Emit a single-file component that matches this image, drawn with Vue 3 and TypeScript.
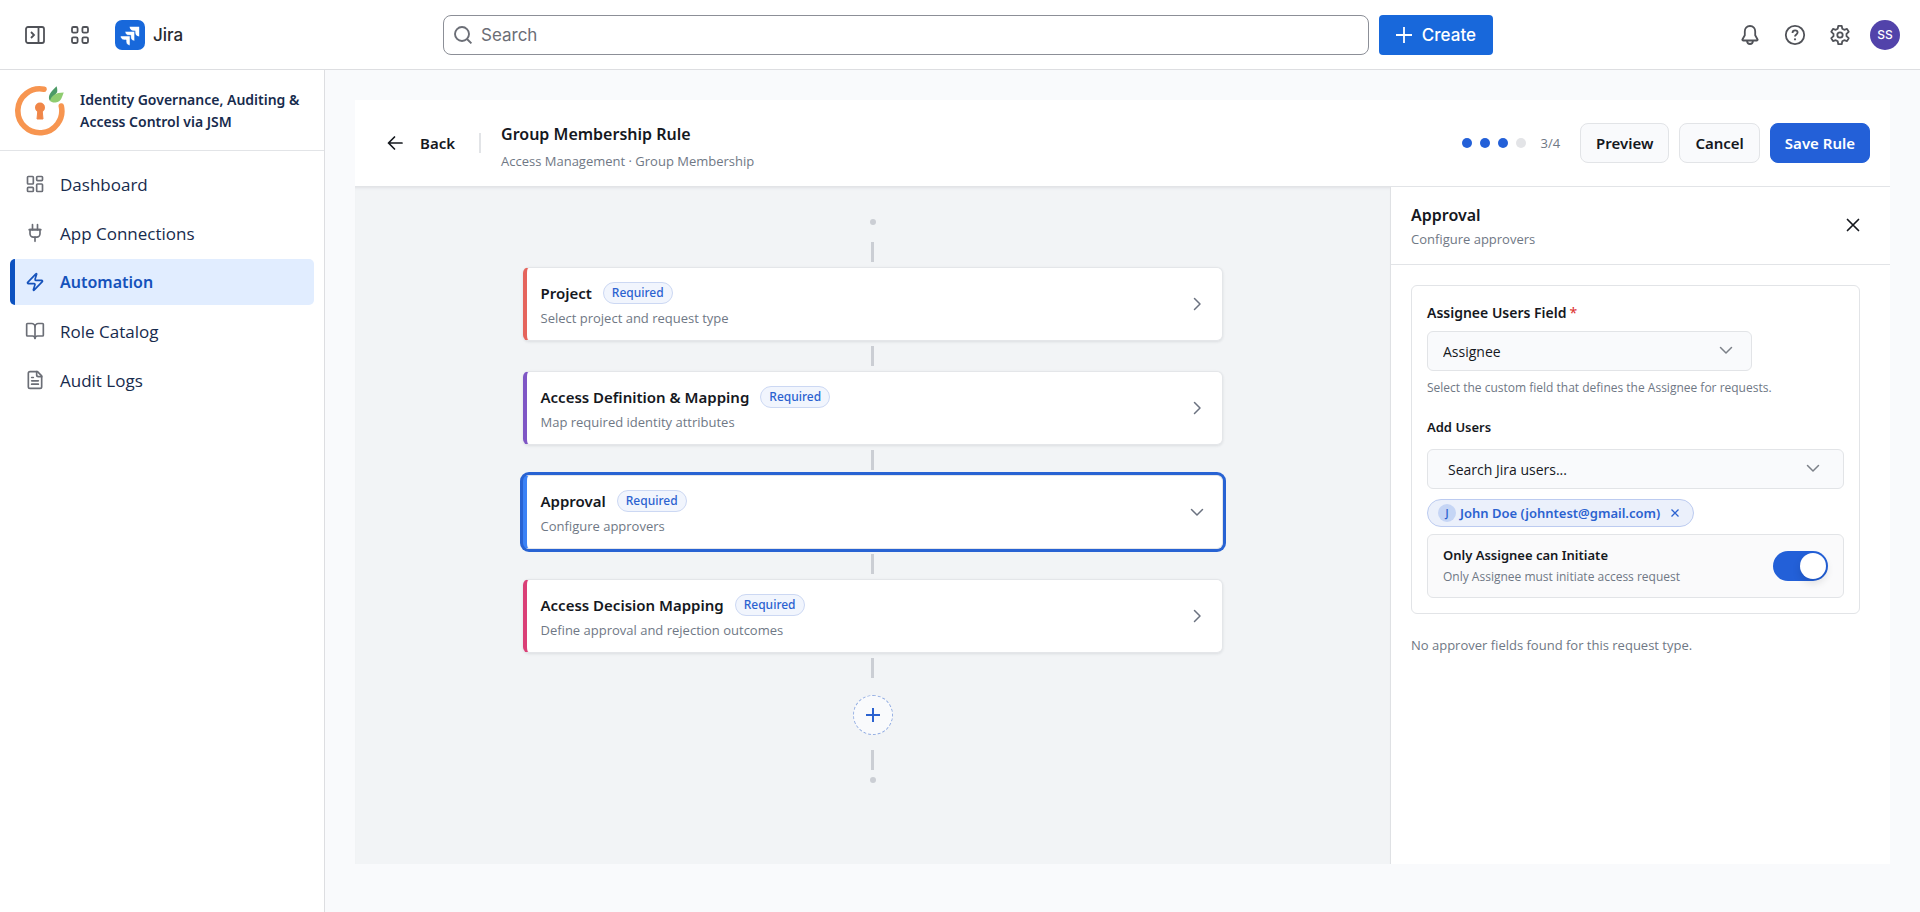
<script setup lang="ts">
import { ref } from 'vue'

interface NavItem { label: string; paths: string[] }
interface Step { title: string; text: string; color: string }

const nav: NavItem[] = [
  { label: 'Dashboard', paths: ['M4 3h5a1 1 0 0 1 1 1v7a1 1 0 0 1-1 1H4a1 1 0 0 1-1-1V4a1 1 0 0 1 1-1z', 'M15 3h5a1 1 0 0 1 1 1v3a1 1 0 0 1-1 1h-5a1 1 0 0 1-1-1V4a1 1 0 0 1 1-1z', 'M15 12h5a1 1 0 0 1 1 1v7a1 1 0 0 1-1 1h-5a1 1 0 0 1-1-1v-7a1 1 0 0 1 1-1z', 'M4 16h5a1 1 0 0 1 1 1v3a1 1 0 0 1-1 1H4a1 1 0 0 1-1-1v-3a1 1 0 0 1 1-1z'] },
  { label: 'App Connections', paths: ['M12 22v-5', 'M9 8V2', 'M15 8V2', 'M18 8v5a4 4 0 0 1-4 4h-4a4 4 0 0 1-4-4V8z', 'M5 8h14'] },
  { label: 'Automation', paths: ['M4 14a1 1 0 0 1-.78-1.63l9.9-10.2a.5.5 0 0 1 .86.46l-1.92 6.02A1 1 0 0 0 13 10h7a1 1 0 0 1 .78 1.63l-9.9 10.2a.5.5 0 0 1-.86-.46l1.92-6.02A1 1 0 0 0 11 14z'] },
  { label: 'Role Catalog', paths: ['M12 7v14', 'M3 18a1 1 0 0 1-1-1V4a1 1 0 0 1 1-1h5a4 4 0 0 1 4 4 4 4 0 0 1 4-4h5a1 1 0 0 1 1 1v13a1 1 0 0 1-1 1h-6a3 3 0 0 0-3 3 3 3 0 0 0-3-3z'] },
  { label: 'Audit Logs', paths: ['M15 2H6a2 2 0 0 0-2 2v16a2 2 0 0 0 2 2h12a2 2 0 0 0 2-2V7z', 'M14 2v4a2 2 0 0 0 2 2h4', 'M10 9H8', 'M16 13H8', 'M16 17H8'] },
]
const activeNav = ref('Automation')

const steps: Step[] = [
  { title: 'Project', text: 'Select project and request type', color: '#e5645c' },
  { title: 'Access Definition & Mapping', text: 'Map required identity attributes', color: '#7f56c5' },
  { title: 'Approval', text: 'Configure approvers', color: '#3b82f6' },
  { title: 'Access Decision Mapping', text: 'Define approval and rejection outcomes', color: '#da3f76' },
]
const activeStep = ref('Approval')
const field = ref('Assignee')
const users = ref(['John Doe (johntest@gmail.com)'])
const onlyAssignee = ref(true)
</script>

<template>
  <div class="shell">
    <header class="topbar">
      <div class="top-left">
        <button class="icon-btn" aria-label="Expand sidebar">
          <svg width="20" height="18" viewBox="0 0 20 18" fill="none" stroke="currentColor" stroke-width="1.8"><rect x="1" y="1" width="18" height="16" rx="2" /><path d="M13.5 1v16M6 6l3 3-3 3" /></svg>
        </button>
        <button class="icon-btn" aria-label="App switcher">
          <svg width="18" height="18" viewBox="0 0 18 18" fill="none" stroke="currentColor" stroke-width="1.8"><rect x="1" y="1" width="5.6" height="5.6" rx="1.4" /><rect x="11.4" y="1" width="5.6" height="5.6" rx="1.4" /><rect x="1" y="11.4" width="5.6" height="5.6" rx="1.4" /><rect x="11.4" y="11.4" width="5.6" height="5.6" rx="1.4" /></svg>
        </button>
        <a class="brand" href="#">
          <svg width="30" height="30" viewBox="0 0 30 30"><rect width="30" height="30" rx="7" fill="#1868db" /><g fill="#fff"><path d="M14.6 6.8h9.6v9.6c-2.4 0-3.9-1.8-3.9-3.9v-1.8h-1.8c-2.1 0-3.9-1.5-3.9-3.9z" /><path d="M10 11.4h9.6V21c-2.4 0-3.9-1.8-3.9-3.9v-1.8h-1.8c-2.1 0-3.9-1.5-3.9-3.9z" stroke="#1868db" stroke-width=".5" /><path d="M5.4 16H15v9.4c-2.4 0-3.9-1.8-3.9-3.9v-1.6H9.3C7.2 19.9 5.4 18.4 5.4 16z" stroke="#1868db" stroke-width=".5" /></g></svg>
          <span>Jira</span>
        </a>
      </div>
      <div class="top-center">
        <label class="search">
          <svg width="20" height="20" viewBox="0 0 20 20" fill="none" stroke="currentColor" stroke-width="1.9"><circle cx="9" cy="9" r="7" /><path d="M14 14l4.4 4.4" /></svg>
          <input type="search" placeholder="Search" aria-label="Search" />
        </label>
        <button class="create">
          <svg width="16" height="16" viewBox="0 0 16 16" fill="none" stroke="currentColor" stroke-width="1.8"><path d="M8 0v16M0 8h16" /></svg>
          Create
        </button>
      </div>
      <div class="top-right">
        <button class="icon-btn" aria-label="Notifications">
          <svg width="22" height="22" viewBox="0 0 22 22" fill="none" stroke="currentColor" stroke-width="1.8" stroke-linejoin="round"><path d="M11 2c-3.3 0-5.2 2.5-5.2 5.4v3.8L3.4 15.5a.7.7 0 0 0 .6 1h14a.7.7 0 0 0 .6-1l-2.4-4.3V7.4C16.2 4.5 14.3 2 11 2zM8 16.8c.2 2.2 1.4 3.2 3 3.2s2.8-1 3-3.2" /></svg>
        </button>
        <button class="icon-btn" aria-label="Help">
          <svg width="22" height="22" viewBox="0 0 22 22" fill="none" stroke="currentColor" stroke-width="1.8"><circle cx="11" cy="11" r="9.2" /><path d="M8.5 8.9c0-1.5 1.1-2.5 2.6-2.5s2.5.9 2.5 2.2c0 1.9-2.6 1.9-2.6 4" /><circle cx="11" cy="15.3" r="1.1" fill="currentColor" stroke="none" /></svg>
        </button>
        <button class="icon-btn" aria-label="Settings">
          <svg width="22" height="22" viewBox="0 0 22 22" fill="none" stroke="currentColor" stroke-width="1.8" stroke-linejoin="round"><circle cx="11" cy="11" r="2.7" /><path d="M9.3 1.8h3.4l.6 2.9 1.9 1.1 2.8-.9 1.7 2.9-2.2 2v2.4l2.2 2-1.7 2.9-2.8-.9-1.9 1.1-.6 2.9H9.3l-.6-2.9-1.9-1.1-2.8.9-1.7-2.9 2.2-2V9.8l-2.2-2L4 4.9l2.8.9 1.9-1.1z" /></svg>
        </button>
        <button class="avatar" aria-label="Account">SS</button>
      </div>
    </header>

    <div class="body">
      <aside class="sidebar">
        <div class="app-head">
          <svg width="52" height="52" viewBox="0 0 52 52"><path d="M30 4.2A22 22 0 1 0 47.3 21" fill="none" stroke="#f79550" stroke-width="5.6" stroke-linecap="round" /><circle cx="26" cy="22.5" r="5" fill="#f08648" /><path d="M24 24h4l1 10h-6z" fill="#f08648" stroke="#f08648" stroke-linejoin="round" /><path d="M35 14c-.6-5 3-8 7.5-12.8 1 2.6.9 4.5.6 6L36 16z" fill="#4c9a66" /><path d="M36 16c1.5-5.500 5.500-8.500 13.800-8.500-1.600 3-2 9.500-8.300 10-2.500.2-4.500-.5-5.500-1.500z" fill="#8fcc70" /></svg>
          <div class="app-name">Identity Governance, Auditing &amp; Access Control via JSM</div>
        </div>
        <nav class="nav">
          <a v-for="item in nav" :key="item.label" href="#" :class="{ active: item.label === activeNav }" @click.prevent="activeNav = item.label">
            <svg width="20" height="20" viewBox="0 0 24 24" fill="none" stroke="currentColor" stroke-width="2" stroke-linecap="round" stroke-linejoin="round"><path v-for="p in item.paths" :key="p" :d="p" /></svg>
            {{ item.label }}
          </a>
        </nav>
      </aside>

      <main class="main">
        <section class="rule">
          <header class="rule-head">
            <button class="back">
              <svg width="16" height="16" viewBox="0 0 16 16" fill="none" stroke="currentColor" stroke-width="1.7" stroke-linecap="round" stroke-linejoin="round"><path d="M15 8H1.5M7.5 2l-6 6 6 6" /></svg>
              Back
            </button>
            <span class="divider"></span>
            <div class="rule-title">
              <h1>Group Membership Rule</h1>
              <p>Access Management · Group Membership</p>
            </div>
            <div class="progress">
              <i v-for="n in 4" :key="n" :class="{ done: n < 4 }"></i>
              <span>3/4</span>
            </div>
            <div class="actions">
              <button>Preview</button>
              <button>Cancel</button>
              <button class="primary">Save Rule</button>
            </div>
          </header>

          <div class="rule-body">
            <div class="canvas">
              <span class="dot"></span>
              <span class="line first"></span>
              <template v-for="step in steps" :key="step.title">
                <button class="step" :class="{ open: step.title === activeStep }" :style="{ borderLeftColor: step.color }" @click="activeStep = step.title">
                  <span class="step-text">
                    <span class="step-title">{{ step.title }}<span class="badge">Required</span></span>
                    <span class="step-sub">{{ step.text }}</span>
                  </span>
                  <svg class="chev" width="16" height="16" viewBox="0 0 16 16" fill="none" stroke="currentColor" stroke-width="1.5" stroke-linecap="round" stroke-linejoin="round"><path :d="step.title === activeStep ? 'M2.5 5.5L8 11l5.5-5.5' : 'M5.5 2.5L11 8l-5.5 5.5'" /></svg>
                </button>
                <span class="line"></span>
              </template>
              <button class="add" aria-label="Add step">
                <svg width="14" height="14" viewBox="0 0 14 14" stroke="currentColor" stroke-width="2"><path d="M7 0v14M0 7h14" /></svg>
              </button>
              <span class="line last"></span>
              <span class="dot"></span>
            </div>

            <aside class="panel">
              <header class="panel-head">
                <div>
                  <h2>Approval</h2>
                  <p>Configure approvers</p>
                </div>
                <button class="close" aria-label="Close">
                  <svg width="14" height="14" viewBox="0 0 14 14" stroke="currentColor" stroke-width="1.7" stroke-linecap="round"><path d="M1.5 1.5l11 11M12.5 1.5l-11 11" /></svg>
                </button>
              </header>
              <div class="panel-body">
                <div class="box">
                  <label class="lbl" for="field">Assignee Users Field<em>*</em></label>
                  <div class="control short">
                    <select id="field" v-model="field"><option>Assignee</option><option>Reporter</option></select>
                    <svg width="14" height="14" viewBox="0 0 14 14" fill="none" stroke="currentColor" stroke-width="1.5" stroke-linecap="round" stroke-linejoin="round"><path d="M1.5 4.5L7 10l5.5-5.5" /></svg>
                  </div>
                  <p class="help">Select the custom field that defines the Assignee for requests.</p>
                  <label class="lbl small" for="users">Add Users</label>
                  <div class="control users">
                    <input id="users" type="text" placeholder="Search Jira users..." />
                    <svg width="14" height="14" viewBox="0 0 14 14" fill="none" stroke="currentColor" stroke-width="1.5" stroke-linecap="round" stroke-linejoin="round"><path d="M1.5 4.5L7 10l5.5-5.5" /></svg>
                  </div>
                  <div v-for="u in users" :key="u" class="chip">
                    <span class="initial">{{ u[0] }}</span>
                    <span>{{ u }}</span>
                    <button :aria-label="'Remove ' + u" @click="users = users.filter((x) => x !== u)">
                      <svg width="10" height="10" viewBox="0 0 10 10" stroke="currentColor" stroke-width="1.3"><path d="M1.5 1.5l7 7M8.5 1.5l-7 7" /></svg>
                    </button>
                  </div>
                  <label class="toggle">
                    <span>
                      <strong>Only Assignee can Initiate</strong>
                      <small>Only Assignee must initiate access request</small>
                    </span>
                    <input v-model="onlyAssignee" type="checkbox" role="switch" />
                  </label>
                </div>
                <p class="empty">No approver fields found for this request type.</p>
              </div>
            </aside>
          </div>
        </section>
      </main>
    </div>
  </div>
</template>

<style>
body { margin: 0; }
</style>

<style scoped>
.shell { --strong: "Segoe UI", "Noto Sans", sans-serif; min-height: 100vh; display: flex; flex-direction: column; background: #fff; color: #15181e; font-family: "Segoe UI", "Open Sans", sans-serif; font-size: 14px; }
.shell *, .shell *::before { box-sizing: border-box; }
button, input, select { font: inherit; color: inherit; }
button { cursor: pointer; }
h1, h2, p { margin: 0; }
a { text-decoration: none; }
svg { display: block; flex: none; }

.topbar { display: grid; grid-template-columns: 1fr minmax(0, 1066px) 1fr; align-items: center; height: 70px; padding: 0 20px; border-bottom: 1px solid #dddee1; color: #505258; font-family: Inter, sans-serif; }
.top-left, .top-right { display: flex; align-items: center; }
.top-left { gap: 15px; }
.top-right { justify-content: flex-end; gap: 15px; }
.icon-btn { display: flex; align-items: center; justify-content: center; width: 30px; height: 30px; padding: 0; border: 0; background: none; }
.brand { display: flex; align-items: center; gap: 8px; margin-left: 5px; color: #292a2e; font-size: 17px; font-weight: 500; }
.top-center { display: flex; gap: 10px; padding-left: 16px; }
.search { display: flex; flex: 1; align-items: center; gap: 8px; height: 40px; padding: 0 9px; border: 1px solid #8c8f97; border-radius: 8px; color: #6b6e76; }
.search input { flex: 1; min-width: 0; padding: 0; border: 0; outline: 0; background: none; font-size: 17px; }
.search input::placeholder { color: #6b6e76; opacity: 1; }
.create { display: flex; align-items: center; gap: 10px; height: 40px; padding: 0 17px; border: 0; border-radius: 4px; background: #1868db; color: #fff; font-size: 17px; font-weight: 500; }
.avatar { width: 30px; height: 30px; padding: 0; border: 0; border-radius: 50%; background: #5243aa; color: #fff; font-size: 12px; font-weight: 500; }

.body { display: flex; flex: 1; }
.sidebar { width: 325px; flex: none; border-right: 1px solid #dddee1; }
.app-head { display: flex; align-items: center; gap: 14px; height: 81px; padding: 2px 14px 0; border-bottom: 1px solid #e2e4e7; }
.app-name { color: #172b4d; font-family: var(--strong); font-size: 14px; font-weight: 600; line-height: 22px; }
.nav { display: flex; flex-direction: column; gap: 3px; padding: 10px; }
.nav a { display: flex; align-items: center; gap: 15px; height: 46px; padding: 0 0 0 15px; border-radius: 5px; color: #172b4d; font-size: 17px; }
.nav svg { color: #6b6e76; }
.nav .active { padding-left: 10px; border-left: 5px solid #0c51c0; background: #e1edff; color: #1552bb; font-family: var(--strong); font-size: 16px; font-weight: 600; }
.nav .active svg { color: #1552bb; }

.main { display: flex; flex: 1; min-width: 0; padding: 30px 30px 48px; background: #f9fafc; }
.rule { display: flex; flex: 1; flex-direction: column; min-width: 0; background: #fff; }
.rule-head { display: flex; align-items: center; height: 87px; padding: 0 20px 0 32px; border-bottom: 1px solid #e2e4e7; }
.back, .actions, .step-title { font-family: var(--strong); }
.back { display: flex; align-items: center; gap: 17px; padding: 0; border: 0; background: none; font-size: 15px; font-weight: 600; }
.divider { width: 2px; height: 20px; margin: 0 20px 0 24px; background: #e2e4e7; }
.rule-title { flex: 1; padding-top: 8px; }
h1, h2 { font-family: var(--strong); font-size: 16px; font-weight: 600; line-height: 28px; }
.rule-title p { color: #6f7885; font-size: 13px; line-height: 26px; }
.progress { display: flex; align-items: center; gap: 8px; margin-right: 20px; }
.progress i { width: 10px; height: 10px; border-radius: 50%; background: #e3e4e7; }
.progress i.done { background: #2360d8; }
.progress span { margin-left: 6px; color: #6f7885; font-size: 13px; }
.actions { display: flex; gap: 10px; }
.actions button { height: 40px; padding: 0 15px; border: 1px solid #e2e4e7; border-radius: 8px; background: #f9fafc; font-size: 15px; font-weight: 600; }
.actions .primary { padding: 0 14px; border-color: #2360d8; background: #2360d8; color: #fff; }

.rule-body { display: flex; flex: 1; }
.canvas { display: flex; flex: 1; flex-direction: column; align-items: center; min-width: 0; padding: 32px 24px 80px; background: #f2f4f6; box-shadow: inset 0 3px 3px -2px #dfe1e4; }
.dot { width: 6px; height: 6px; border-radius: 50%; background: #cbced4; }
.line { width: 3px; height: 20px; margin: 5px 0; background: #cbced4; }
.line.first { margin-top: 17px; }
.line.last { margin: 15px 0 7px; }
.step { display: flex; align-items: center; justify-content: space-between; width: 100%; max-width: 700px; height: 74px; padding: 0 17px 0 14px; border: 1px solid #e4e6e9; border-left: 4px solid; border-radius: 6px; background: #fff; box-shadow: 0 1px 3px rgba(20, 25, 35, .1); text-align: left; }
.step.open { box-shadow: 0 0 0 3px #2863d3; }
.step-text, .step-title { display: flex; }
.step-text { flex-direction: column; gap: 2px; padding-top: 2px; }
.step-title { align-items: center; gap: 11px; font-size: 15px; font-weight: 600; line-height: 24px; }
.step-sub { color: #6f7885; font-size: 13px; line-height: 22px; }
.badge { padding: 0 8px; border: 1px solid #ccd8f3; border-radius: 11px; background: #f1f5fd; color: #2b62d0; font-size: 12px; font-weight: 500; line-height: 20px; }
.chev { color: #6b7280; }
.add { display: flex; flex: none; align-items: center; justify-content: center; width: 40px; height: 40px; margin-top: 12px; padding: 0; border: 1px dashed #94aee3; border-radius: 50%; background: #f9fafc; color: #2b62d0; }

.panel { width: 500px; flex: none; border-left: 1px solid #dfe1e4; }
.panel-head { display: flex; align-items: center; justify-content: space-between; height: 78px; padding: 0 30px 2px 20px; border-bottom: 1px solid #e2e4e7; }
.panel-head p { color: #6f7885; font-size: 13px; line-height: 20px; }
.close { padding: 0; border: 0; background: none; }
.panel-body { padding: 20px 30px 20px 20px; }
.box { padding: 15px; border: 1px solid #e2e4e7; border-radius: 6px; }
.lbl { display: block; margin-bottom: 6px; font-family: var(--strong); font-size: 14px; font-weight: 600; line-height: 24px; }
.lbl em { margin-left: 3px; color: #dc3030; font-style: normal; font-weight: 400; }
.lbl.small { margin-bottom: 10px; font-size: 13px; }
.control { position: relative; height: 40px; }
.control.short { max-width: 325px; }
.control select, .control input { width: 100%; height: 100%; padding: 0 40px 0 15px; border: 1px solid #e2e4e7; border-radius: 6px; outline: 0; background: #f9fafc; font-size: 14px; appearance: none; }
.control.users input { padding-left: 20px; }
.control input::placeholder { color: #15181e; opacity: 1; }
.control svg { position: absolute; top: 12px; right: 19px; color: #7c8088; pointer-events: none; }
.control.users svg { right: 24px; }
.help { margin: 7px 0 17px; color: #6f7885; font-size: 12px; line-height: 20px; }
.chip { display: flex; align-items: center; width: fit-content; height: 28px; margin: 10px 0 7px; padding: 0 13px 0 10px; border: 1px solid #bccbf0; border-radius: 14px; background: #ebf0fb; color: #2b62d0; font-family: var(--strong); font-size: 13px; font-weight: 600; }
.initial { width: 18px; margin-right: 4px; border-radius: 50%; background: #c5d5f5; font-size: 10px; line-height: 18px; text-align: center; }
.chip button { margin-left: 10px; padding: 0; border: 0; background: none; }
.toggle { display: flex; align-items: center; justify-content: space-between; height: 64px; padding: 0 15px; border: 1px solid #e2e4e7; border-radius: 6px; background: #fafafb; }
.toggle strong, .toggle small { display: block; line-height: 22px; }
.toggle strong { font-family: var(--strong); font-size: 13px; font-weight: 600; }
.toggle small { color: #6f7885; font-size: 12px; }
.toggle input { display: flex; align-items: center; width: 55px; height: 30px; margin: 0; padding: 2px; border-radius: 15px; background: #c5c9d0; appearance: none; }
.toggle input::before { width: 26px; height: 26px; border-radius: 50%; background: #fff; box-shadow: 0 4px 8px rgba(0, 0, 0, .12); content: ""; }
.toggle input:checked { justify-content: flex-end; background: #2360d8; }
.empty { margin-top: 20px; color: #6f7885; font-size: 13px; line-height: 22px; }
</style>
